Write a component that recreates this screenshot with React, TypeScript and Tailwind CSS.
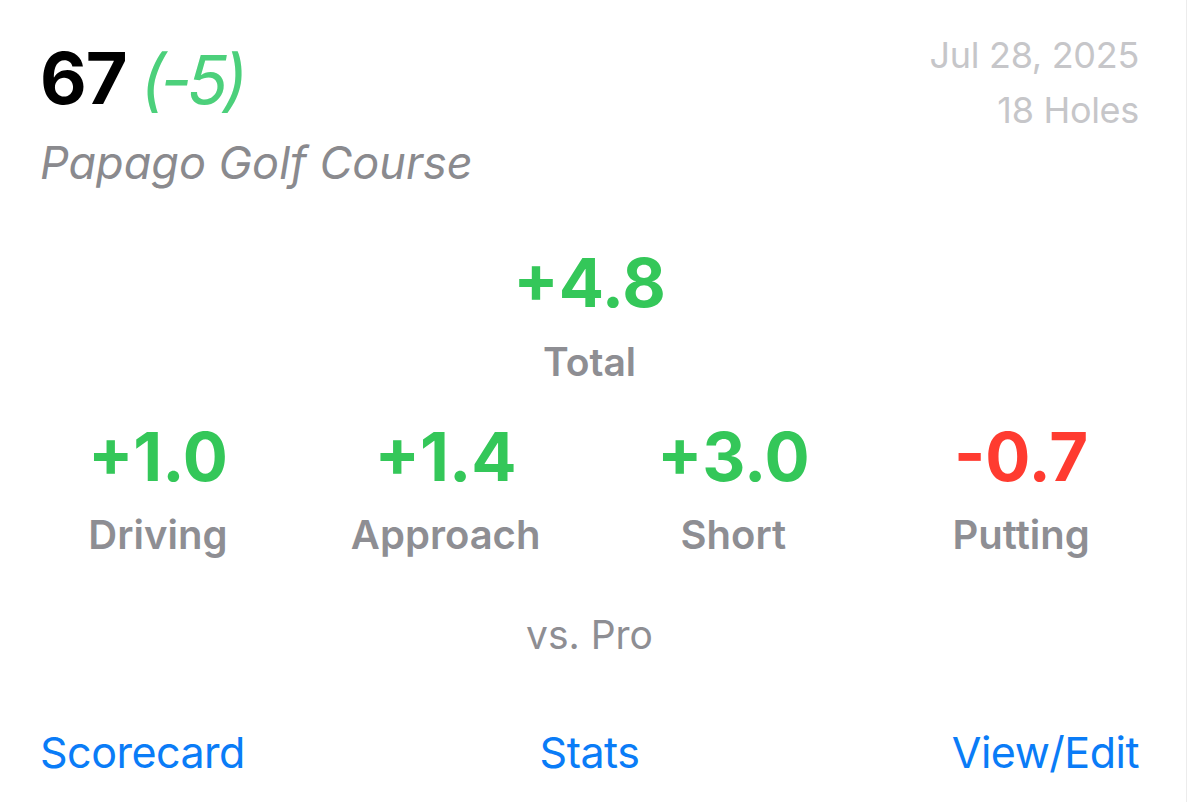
const categories = [
  { value: '+1.0', label: 'Driving', positive: true },
  { value: '+1.4', label: 'Approach', positive: true },
  { value: '+3.0', label: 'Short', positive: true },
  { value: '-0.7', label: 'Putting', positive: false },
];

export default function App() {
  return (
    <div className="min-h-screen w-[1191px] bg-white font-['Inter','Noto_Sans',sans-serif]">
      <div className="w-[1187px] border-r border-[#ececec] pb-[20px] pl-[40px] pr-[47px] pt-[33px] antialiased">
        {/* Header: score + course, date + holes */}
        <div className="flex items-start justify-between">
          <div>
            <h1 className="text-[72px] leading-[90px]">
              <span className="font-bold tracking-[-1px] text-black">67</span>
              <span className="ml-[14px] text-[68px] italic tracking-[-5px] text-[#4cd07b]">(-5)</span>
            </h1>
            <p className="mt-[9px] text-[45px] italic leading-[60px] text-[#8a8a8e]">Papago Golf Course</p>
          </div>
          <div className="text-right text-[36px] tracking-[-0.3px] text-[#c6c6c9]">
            <div className="leading-[44px]">Jul 28, 2025</div>
            <div className="mt-[11px] leading-[44px]">18 Holes</div>
          </div>
        </div>

        {/* Strokes gained */}
        <div className="mt-[52px] flex flex-col items-center">
          <div className="text-[67px] font-bold leading-[76px] text-[#34c759]">+4.8</div>
          <div className="mt-[16px] text-[39px] font-semibold leading-[50px] text-[#8e8e93]">Total</div>
        </div>

        <div className="-mx-[26px] mt-[32px] grid grid-cols-4">
          {categories.map(c => (
            <div key={c.label} className="flex flex-col items-center">
              <div
                className={
                  c.positive
                    ? 'text-[67px] font-bold leading-[76px] text-[#34c759]'
                    : 'text-[67px] font-bold leading-[76px] text-[#ff3b30]'
                }
              >
                {c.value}
              </div>
              <div className="mt-[15px] text-[40px] font-semibold leading-[50px] text-[#8e8e93]">{c.label}</div>
            </div>
          ))}
        </div>

        <div className="mt-[50px] text-center text-[39px] leading-[50px] text-[#8e8e93]">vs. Pro</div>

        {/* Actions */}
        <div className="mt-[62px] grid grid-cols-3 items-center text-[43px] leading-[60px] tracking-[-0.5px] text-[#0a7cf7]">
          <button className="justify-self-start leading-[60px]">Scorecard</button>
          <button className="justify-self-center leading-[60px]">Stats</button>
          <button className="justify-self-end leading-[60px]">View/Edit</button>
        </div>
      </div>
    </div>
  );
}
